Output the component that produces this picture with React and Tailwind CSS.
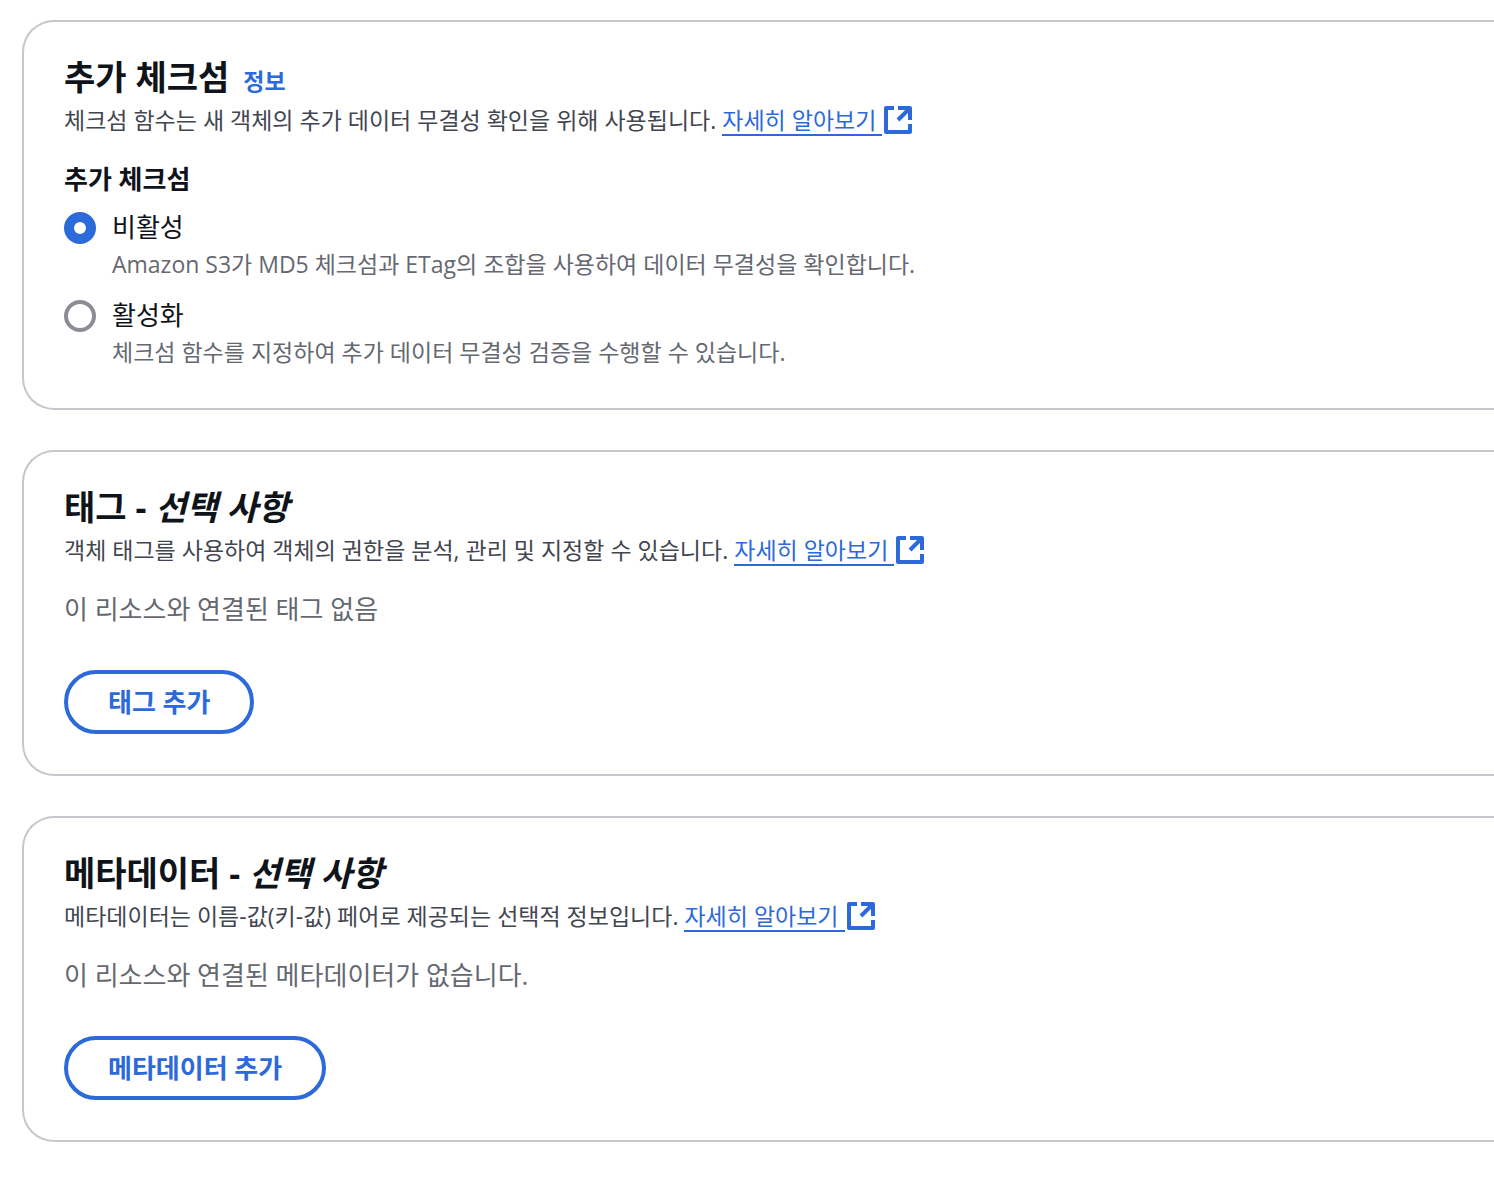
import React, { useState } from 'react';
import clsx from 'clsx';

const ExternalIcon = () => (
  <svg viewBox="0 0 28 28" className="w-7 h-7 shrink-0" fill="none" stroke="currentColor" strokeWidth="4" role="img" aria-label="새 탭에서 열기">
    <path d="M10 2H2V26H26V18" strokeLinejoin="round" />
    <path d="M14 2H26V14" strokeLinejoin="round" />
    <path d="M26 2L14 14" />
  </svg>
);

const LearnMore = () => (
  <a href="#" className="inline-flex items-center gap-[2px] align-top text-[#2c69d9]">
    <span className="h-8 border-b-2 border-[#2c69d9] pr-[6px]">자세히 알아보기</span>
    <ExternalIcon />
  </a>
);

const Section = ({ title, optional, info, description, children }) => (
  <section className="rounded-l-[32px] border-2 border-r-0 border-[#c6c6cd] pt-[34px] pb-10 px-10">
    <div className="flex items-baseline gap-3.5">
      <h2 className="text-[34px] leading-[42px] font-bold">
        {title}
        {optional && <> - <em>선택 사항</em></>}
      </h2>
      {info && <a href="#" className="text-[23px] leading-8 font-bold text-[#2c69d9]">정보</a>}
    </div>
    <p className="mt-1.5 text-[23px] leading-8 text-[#424650]">
      {description} <LearnMore />
    </p>
    {children}
  </section>
);

const RadioOption = ({ id, label, description, checked, onChange }) => (
  <div className="flex gap-4">
    <input
      type="radio"
      id={id}
      name="checksum"
      checked={checked}
      onChange={onChange}
      aria-describedby={`${id}-desc`}
      className={clsx(
        'appearance-none w-8 h-8 mt-1 shrink-0 rounded-full bg-white',
        checked ? 'border-[10px] border-[#2c69d9]' : 'border-4 border-[#8c8c94]'
      )}
    />
    <div>
      <label htmlFor={id} className="block text-[26px] leading-[38px]">{label}</label>
      <p id={`${id}-desc`} className="mt-0.5 text-[23px] leading-8 text-[#656871]">{description}</p>
    </div>
  </div>
);

const EmptyText = ({ children }) => (
  <p className="mt-6 text-[26px] leading-[38px] text-[#656871]">{children}</p>
);

const AddButton = ({ children }) => (
  <button
    type="button"
    className="mt-[42px] flex h-16 items-center rounded-full border-4 border-[#2c69d9] px-10 text-[26px] leading-[38px] font-bold text-[#2c69d9]"
  >
    {children}
  </button>
);

const App = () => {
  const [checksum, setChecksum] = useState('off');

  return (
    <main className="flex flex-col gap-10 bg-white py-5 pl-[22px] font-['Open_Sans','Noto_Sans_CJK_KR',sans-serif] text-[#0f141a]">
      {/* Checksum */}
      <Section title="추가 체크섬" info description="체크섬 함수는 새 객체의 추가 데이터 무결성 확인을 위해 사용됩니다.">
        <fieldset className="mt-6">
          <legend className="text-[26px] leading-[38px] font-bold">추가 체크섬</legend>
          <div className="mt-2.5 flex flex-col gap-4">
            <RadioOption
              id="checksum-off"
              label="비활성"
              description="Amazon S3가 MD5 체크섬과 ETag의 조합을 사용하여 데이터 무결성을 확인합니다."
              checked={checksum === 'off'}
              onChange={() => setChecksum('off')}
            />
            <RadioOption
              id="checksum-on"
              label="활성화"
              description="체크섬 함수를 지정하여 추가 데이터 무결성 검증을 수행할 수 있습니다."
              checked={checksum === 'on'}
              onChange={() => setChecksum('on')}
            />
          </div>
        </fieldset>
      </Section>

      {/* Tags */}
      <Section title="태그" optional description="객체 태그를 사용하여 객체의 권한을 분석, 관리 및 지정할 수 있습니다.">
        <EmptyText>이 리소스와 연결된 태그 없음</EmptyText>
        <AddButton>태그 추가</AddButton>
      </Section>

      {/* Metadata */}
      <Section title="메타데이터" optional description="메타데이터는 이름-값(키-값) 페어로 제공되는 선택적 정보입니다.">
        <EmptyText>이 리소스와 연결된 메타데이터가 없습니다.</EmptyText>
        <AddButton>메타데이터 추가</AddButton>
      </Section>
    </main>
  );
};

export default App;
